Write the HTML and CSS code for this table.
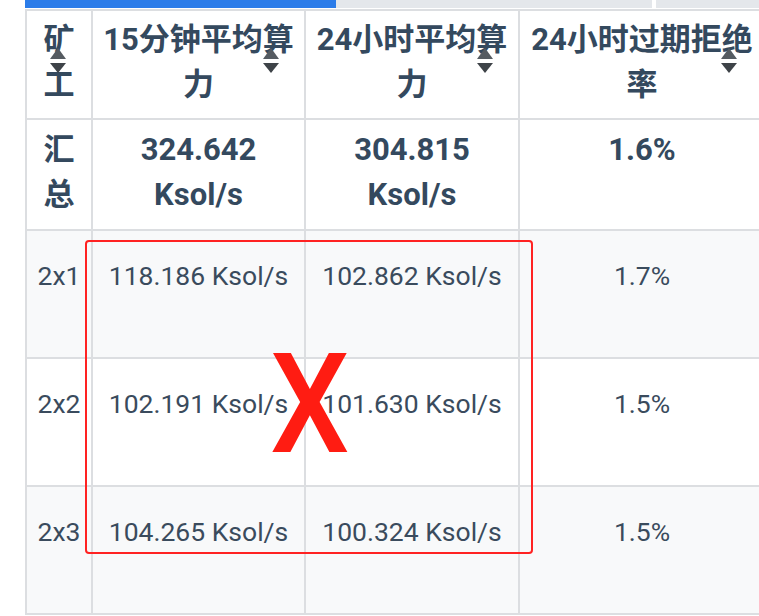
FILE: index.html
```html
<!DOCTYPE html>
<html lang="zh-CN">
<head>
<meta charset="utf-8">
<title>矿工算力</title>
<link rel="stylesheet" href="styles.css">
</head>
<body>
<div class="page">
  <div class="scrollbar">
    <span class="seg seg-active"></span>
    <span class="seg seg-track"></span>
    <span class="seg-gap"></span>
    <span class="seg seg-track seg-rest"></span>
  </div>
  <table class="pool">
    <colgroup>
      <col class="c-miner">
      <col class="c-rate">
      <col class="c-rate2">
      <col class="c-reject">
    </colgroup>
    <thead>
      <tr>
        <th>矿工<svg class="sort" viewBox="0 0 16 26"><path d="M8 0 L16 11 H0 Z" class="up"/><path d="M0 15 H16 L8 25 Z" class="down"/></svg></th>
        <th>15分钟平均算力<svg class="sort" viewBox="0 0 16 26"><path d="M8 0 L16 11 H0 Z" class="up"/><path d="M0 15 H16 L8 25 Z" class="down"/></svg></th>
        <th>24小时平均算力<svg class="sort" viewBox="0 0 16 26"><path d="M8 0 L16 11 H0 Z" class="up"/><path d="M0 15 H16 L8 25 Z" class="down"/></svg></th>
        <th>24小时过期拒绝率<svg class="sort sort-last" viewBox="0 0 16 26"><path d="M8 0 L16 11 H0 Z" class="up"/><path d="M0 15 H16 L8 25 Z" class="down"/></svg></th>
      </tr>
    </thead>
    <tbody>
      <tr class="total">
        <td>汇总</td>
        <td>324.642 Ksol/s</td>
        <td>304.815 Ksol/s</td>
        <td>1.6%</td>
      </tr>
      <tr class="row alt">
        <td>2x1</td>
        <td>118.186 Ksol/s</td>
        <td>102.862 Ksol/s</td>
        <td>1.7%</td>
      </tr>
      <tr class="row">
        <td>2x2</td>
        <td>102.191 Ksol/s</td>
        <td>101.630 Ksol/s</td>
        <td>1.5%</td>
      </tr>
      <tr class="row alt">
        <td>2x3</td>
        <td>104.265 Ksol/s</td>
        <td>100.324 Ksol/s</td>
        <td>1.5%</td>
      </tr>
    </tbody>
  </table>
  <div class="mark-box"></div>
  <div class="mark-x">X</div>
</div>
</body>
</html>
```

FILE: styles.css
```css
html, body {
  margin: 0;
  padding: 0;
  background: #ffffff;
  overflow: hidden;
}

body {
  font-family: Roboto, "Noto Sans CJK SC", sans-serif;
  color: #35495e;
}

.page {
  position: relative;
  padding-left: 25px;
  width: 900px;
}

.scrollbar {
  display: flex;
  height: 8px;
  margin-bottom: 1px;
}

.seg {
  display: block;
  height: 100%;
}

.seg-active {
  width: 311px;
  background: #2b7ce9;
}

.seg-track {
  width: 316px;
  background: #e4e7eb;
}

.seg-gap {
  width: 4px;
}

.seg-rest {
  flex: 1;
}

.pool {
  border-collapse: collapse;
  table-layout: fixed;
  width: 739px;
}

.c-miner { width: 66px; }
.c-rate { width: 213px; }
.c-rate2 { width: 214px; }
.c-reject { width: 246px; }

.pool th,
.pool td {
  border: 2px solid #dcdee1;
  text-align: center;
  vertical-align: top;
  padding: 6px 8px 11px;
}

.pool th {
  position: relative;
  font-size: 31px;
  line-height: 45px;
  font-weight: 700;
  color: #34495e;
}

.sort {
  position: absolute;
  right: 25px;
  top: 37px;
  width: 16px;
  height: 26px;
}

.sort-last {
  right: 27px;
}

.sort .up { fill: #555b61; }
.sort .down { fill: #3e4348; }

.total td {
  font-size: 31px;
  line-height: 45px;
  font-weight: 700;
  color: #34495e;
  padding-top: 7px;
  padding-bottom: 12px;
}

.row td {
  font-size: 26.5px;
  line-height: 45px;
  font-weight: 400;
  color: #3a4b5d;
  padding-top: 22px;
  padding-bottom: 59px;
}

.row.alt td {
  background: #f8f9fa;
}

.mark-box {
  position: absolute;
  left: 85px;
  top: 240px;
  width: 444px;
  height: 310px;
  border: 2px solid #ff2222;
  border-radius: 4px;
}

.mark-x {
  position: absolute;
  left: 270px;
  top: 334px;
  font-family: Roboto, sans-serif;
  font-size: 140px;
  line-height: 140px;
  font-weight: 500;
  color: #ff1c12;
  transform: scaleX(0.9);
  transform-origin: left center;
}
```
